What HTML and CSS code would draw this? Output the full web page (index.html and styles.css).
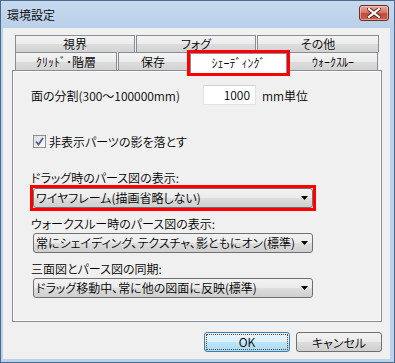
FILE: index.html
```html
<!DOCTYPE html>
<html lang="ja">
<head>
  <meta charset="UTF-8">
  <title>環境設定</title>
  <link rel="stylesheet" href="styles.css">
</head>
<body>
  <div class="window">
    <!-- Barra de título -->
    <div class="titlebar">
      <span class="title">環境設定</span>
      <button class="close">
        <svg width="14" height="10" viewBox="0 0 14 10">
          <path d="M2 1L12 9M12 1L2 9" stroke="#5a2420" stroke-width="4" stroke-linecap="square"/>
          <path d="M2 1L12 9M12 1L2 9" stroke="#ffffff" stroke-width="2.2" stroke-linecap="square"/>
        </svg>
      </button>
    </div>

    <div class="client">
      <!-- Abas -->
      <div class="tabs">
        <div class="tab-row back">
          <div class="tab t-view">視界</div>
          <div class="tab t-fog">フォグ</div>
          <div class="tab t-other">その他</div>
        </div>
        <div class="tab-row front">
          <div class="tab t-grid">ｸﾘｯﾄﾞ･階層</div>
          <div class="tab t-save">保存</div>
          <div class="tab t-shade selected">ｼｪｰﾃﾞｨﾝｸﾞ</div>
          <div class="tab t-walk">ｳｫｰｸｽﾙｰ</div>
        </div>
      </div>

      <!-- Conteúdo da aba -->
      <div class="panel">
        <div class="row-split">
          <span class="split-label">面の分割(300～100000mm)</span>
          <div class="textbox">1000</div>
          <span class="unit">mm単位</span>
        </div>

        <label class="check-row">
          <span class="checkbox">
            <svg width="9" height="9" viewBox="0 0 9 9">
              <path d="M1 4.5L3.5 7.5L8 1" fill="none" stroke="#4c5f95" stroke-width="1.8"/>
            </svg>
          </span>
          <span>非表示パーツの影を落とす</span>
        </label>

        <div class="field-label l-drag">ドラッグ時のパース図の表示:</div>
        <div class="marker">
          <div class="combo">
            <span class="combo-text">ワイヤフレーム(描画省略しない)</span>
            <svg class="arrow" width="7" height="4" viewBox="0 0 7 4"><path d="M0 0H7L3.5 4Z"/></svg>
          </div>
        </div>

        <div class="field-label l-walk">ウォークスルー時のパース図の表示:</div>
        <div class="combo">
          <span class="combo-text">常にシェイディング、テクスチャ、影ともにオン(標準)</span>
          <svg class="arrow" width="7" height="4" viewBox="0 0 7 4"><path d="M0 0H7L3.5 4Z"/></svg>
        </div>

        <div class="field-label l-sync">三面図とパース図の同期:</div>
        <div class="combo">
          <span class="combo-text">ドラッグ移動中、常に他の図面に反映(標準)</span>
          <svg class="arrow" width="7" height="4" viewBox="0 0 7 4"><path d="M0 0H7L3.5 4Z"/></svg>
        </div>
      </div>

      <!-- Botões -->
      <div class="buttons">
        <button class="btn default"><span class="focus">OK</span></button>
        <button class="btn">キャンセル</button>
      </div>
    </div>
  </div>
</body>
</html>
```

FILE: styles.css
```css
/* Geral */
body {
  margin: 0;
  font-family: "Noto Sans CJK JP", "Liberation Sans", sans-serif;
  font-size: 12px;
  font-weight: 350;
  color: #000;
  font-feature-settings: "palt";
}

.window {
  width: 395px;
  height: 363px;
  box-sizing: border-box;
  border: 1px solid #4a6a8c;
  background: #bcd2ea;
  padding: 0 4px 3px 2px;
  display: flex;
  flex-direction: column;
}

/* Barra de título */
.titlebar {
  height: 27px;
  display: flex;
  align-items: center;
  justify-content: space-between;
  background: linear-gradient(to bottom, #c6d9ee, #bad0e9);
  margin: 0 -4px 0 -2px;
  padding: 0 5px 0 6px;
}

.title {
  line-height: 16px;
}

.close {
  align-self: flex-start;
  margin-top: 4px;
  width: 30px;
  height: 16px;
  padding: 0;
  border: 1px solid #6e2c26;
  border-radius: 3px;
  background: linear-gradient(to bottom, #e4a99f 0%, #d47a6c 45%, #c24a37 55%, #c8604c 100%);
  box-shadow: inset 0 0 0 1px rgba(255, 220, 210, 0.5);
  display: flex;
  align-items: center;
  justify-content: center;
}

/* Área cliente */
.client {
  flex: 1;
  background: #f0f0f0;
  padding: 7px 8px 0 9px;
}

/* Abas */
.tabs {
  height: 35px;
}

.tab-row {
  display: flex;
  padding-left: 3px;
}

.tab-row.back {
  height: 17px;
  gap: 1px;
}

.tab-row.front {
  height: 18px;
  align-items: flex-start;
}

.tab {
  box-sizing: border-box;
  height: 100%;
  border: 1px solid #898c95;
  border-bottom: none;
  background: linear-gradient(to bottom, #f4f4f4 0%, #ebebeb 50%, #dddddd 50%, #d3d3d3 100%);
  display: flex;
  align-items: center;
  justify-content: center;
  line-height: 14px;
  white-space: nowrap;
}

.t-view { width: 120px; }
.t-fog { width: 120px; }
.t-other { width: 122px; }

.t-grid { width: 102px; }
.t-save { width: 70px; margin-left: 1px; }
.t-walk { width: 90px; margin-left: 1px; }

.t-grid, .t-shade, .t-walk {
  font-feature-settings: normal;
}

.tab.selected {
  position: relative;
  z-index: 2;
  width: 97px;
  height: 20px;
  margin-top: 1px;
  margin-left: 2px;
  background: #fff;
  outline: 3px solid #ff0000;
  padding-bottom: 2px;
}

/* Painel */
.panel {
  position: relative;
  box-sizing: border-box;
  height: 252px;
  border: 1px solid #898c95;
  background: #f0f0f0;
  box-shadow: inset 1px 1px 0 #fbfbfb, inset -1px -1px 0 #fbfbfb;
  padding: 14px 0 0 18px;
  display: flex;
  flex-direction: column;
  align-items: flex-start;
}

.row-split {
  height: 20px;
  display: flex;
  align-items: center;
}

.split-label {
  width: 172px;
}

.textbox {
  box-sizing: border-box;
  width: 53px;
  height: 20px;
  background: #fff;
  border: 1px solid #e2e3ea;
  border-top-color: #d0d2d8;
  text-align: right;
  padding-right: 5px;
  line-height: 18px;
}

.unit {
  margin-left: 6px;
}

.check-row {
  margin-top: 28px;
  margin-left: 2px;
  height: 16px;
  display: flex;
  align-items: center;
  gap: 3px;
}

.checkbox {
  box-sizing: border-box;
  width: 13px;
  height: 13px;
  border: 1px solid #8f8f8f;
  background: linear-gradient(135deg, #dcdcdc, #fbfbfb);
  display: flex;
  align-items: center;
  justify-content: center;
}

.field-label {
  line-height: 16px;
  height: 16px;
}

.l-drag { margin-top: 21px; }
.l-walk { margin-top: 8px; }
.l-sync { margin-top: 8px; }

.combo {
  box-sizing: border-box;
  margin-top: 1px;
  margin-left: 2px;
  width: 280px;
  height: 20px;
  border: 1px solid #707070;
  border-radius: 3px;
  background: linear-gradient(to bottom, #f2f2f2 0%, #ebebeb 50%, #dddddd 50%, #cfcfcf 100%);
  display: flex;
  align-items: center;
  padding: 0 4px 0 2px;
}

/* Marcação vermelha em volta da primeira lista */
.marker {
  margin-top: 2px;
  margin-left: 2px;
  outline: 3px solid #ff0000;
}

.marker .combo {
  margin: 0;
}

.combo-text {
  flex: 1;
  overflow: hidden;
  white-space: nowrap;
  line-height: 16px;
}

.arrow {
  margin-left: 3px;
  flex-shrink: 0;
}

/* Botões */
.buttons {
  margin-top: 10px;
  display: flex;
  justify-content: flex-end;
  gap: 6px;
}

.btn {
  box-sizing: border-box;
  width: 86px;
  height: 20px;
  padding: 0;
  font-family: inherit;
  font-size: 12px;
  font-weight: 350;
  font-feature-settings: "palt";
  color: #000;
  border: 1px solid #707070;
  border-radius: 3px;
  background: linear-gradient(to bottom, #f2f2f2 0%, #ebebeb 50%, #dddddd 50%, #cfcfcf 100%);
}

.btn.default {
  border-color: #3c7fb1;
  background: linear-gradient(to bottom, #eaf6fd 0%, #d9f0fc 50%, #bee6fd 50%, #a7d9f5 100%);
  padding: 1px;
}

.focus {
  display: block;
  height: 100%;
  box-sizing: border-box;
  border: 1px dotted #7a3b20;
  line-height: 14px;
}
```
